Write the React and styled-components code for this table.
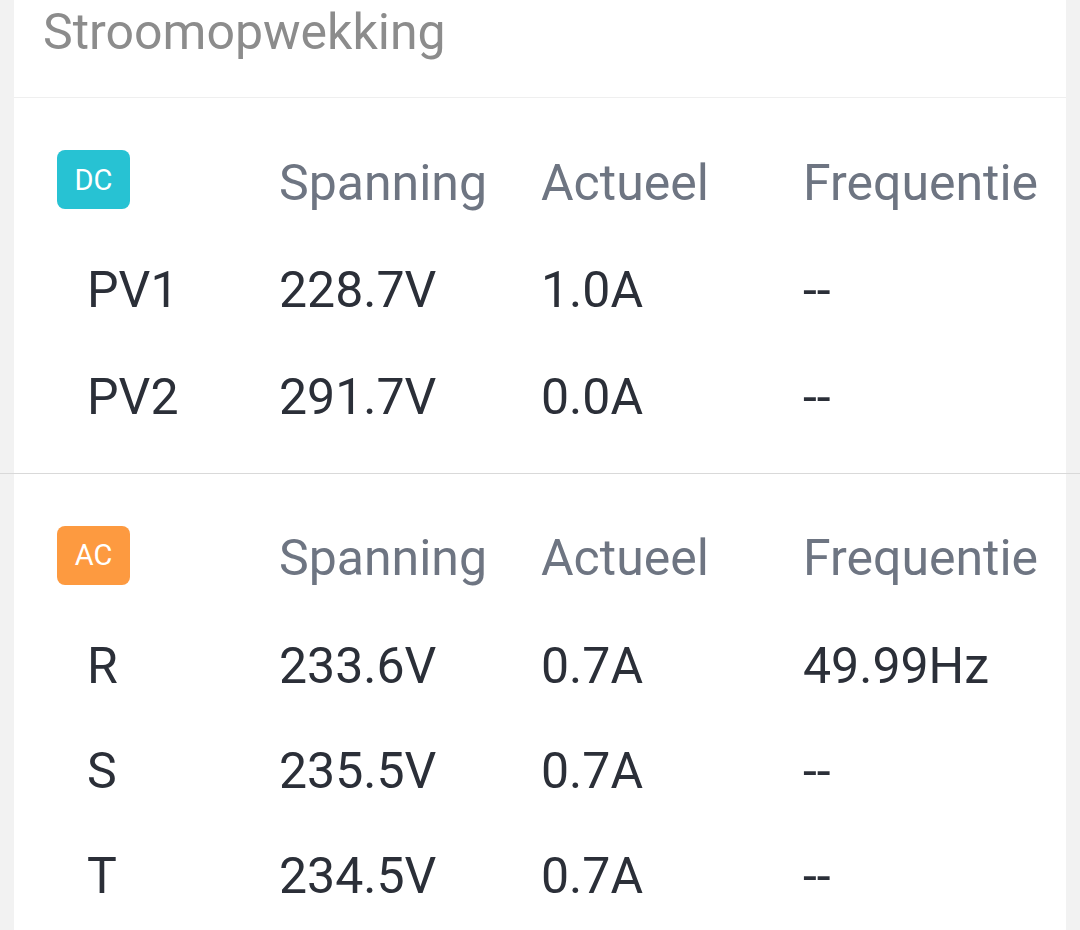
import React from 'react';
import styled, { createGlobalStyle } from 'styled-components';

const GlobalStyle = createGlobalStyle`
  html, body {
    margin: 0;
    padding: 0;
    background-color: #f2f2f2;
    font-family: Roboto, "Noto Sans", "Liberation Sans", sans-serif;
  }
`;

const Page = styled.main`
  width: 1080px;
  height: 930px;
  overflow: hidden;
  display: flex;
  flex-direction: column;
  background-color: #f2f2f2;
`;

const Card = styled.section`
  flex-shrink: 0;
  margin: 0 14px;
  background-color: #ffffff;
`;

const TitleBar = styled.div`
  padding: 2px 29px 0;
  height: 95px;
  border-bottom: 1px solid #efefef;
  font-size: 50px;
  line-height: 60px;
  color: #8c8c8c;
`;

const Separator = styled.div`
  flex-shrink: 0;
  height: 1px;
  background-color: #d9d9d9;
`;

const Table = styled.div`
  display: grid;
  grid-template-columns: 222px 262px 262px 1fr;
  grid-template-rows: ${props => props.$rows};
  align-items: center;
  padding: ${props => props.$pad};
`;

const Badge = styled.div`
  width: 73px;
  height: 59px;
  margin-bottom: 6px;
  border-radius: 8px;
  background-color: ${props => props.$color};
  color: #ffffff;
  font-size: 29px;
  display: flex;
  align-items: center;
  justify-content: center;
`;

const HeadCell = styled.div`
  font-size: 50px;
  line-height: 60px;
  color: #6e7582;
`;

const LabelCell = styled.div`
  padding-left: 30px;
  font-size: 50px;
  line-height: 60px;
  color: #2b2f38;
`;

const ValueCell = styled.div`
  font-size: 50px;
  line-height: 60px;
  color: #2b2f38;
`;

const headers = ['Spanning', 'Actueel', 'Frequentie'];

const dcRows = [
  ['PV1', '228.7V', '1.0A', '--'],
  ['PV2', '291.7V', '0.0A', '--'],
];

const acRows = [
  ['R', '233.6V', '0.7A', '49.99Hz'],
  ['S', '235.5V', '0.7A', '--'],
  ['T', '234.5V', '0.7A', '--'],
];

const Section = ({ badge, color, rows, pad, heights }) => (
  <Table $pad={pad} $rows={heights}>
    <Badge $color={color}>{badge}</Badge>
    {headers.map(h => <HeadCell key={h}>{h}</HeadCell>)}
    {rows.map(row => (
      <React.Fragment key={row[0]}>
        <LabelCell>{row[0]}</LabelCell>
        <ValueCell>{row[1]}</ValueCell>
        <ValueCell>{row[2]}</ValueCell>
        <ValueCell>{row[3]}</ValueCell>
      </React.Fragment>
    ))}
  </Table>
);

export default function App() {
  return (
    <Page>
      <GlobalStyle />
      <Card>
        <TitleBar>Stroomopwekking</TitleBar>
        <Section
          badge="DC"
          color="#27c2d3"
          rows={dcRows}
          pad="31px 0 23px 43px"
          heights="107px 107px 107px"
        />
      </Card>
      <Separator />
      <Card>
        <Section
          badge="AC"
          color="#fd9a40"
          rows={acRows}
          pad="29px 0 40px 43px"
          heights="110px 105px 105px 105px"
        />
      </Card>
    </Page>
  );
}
